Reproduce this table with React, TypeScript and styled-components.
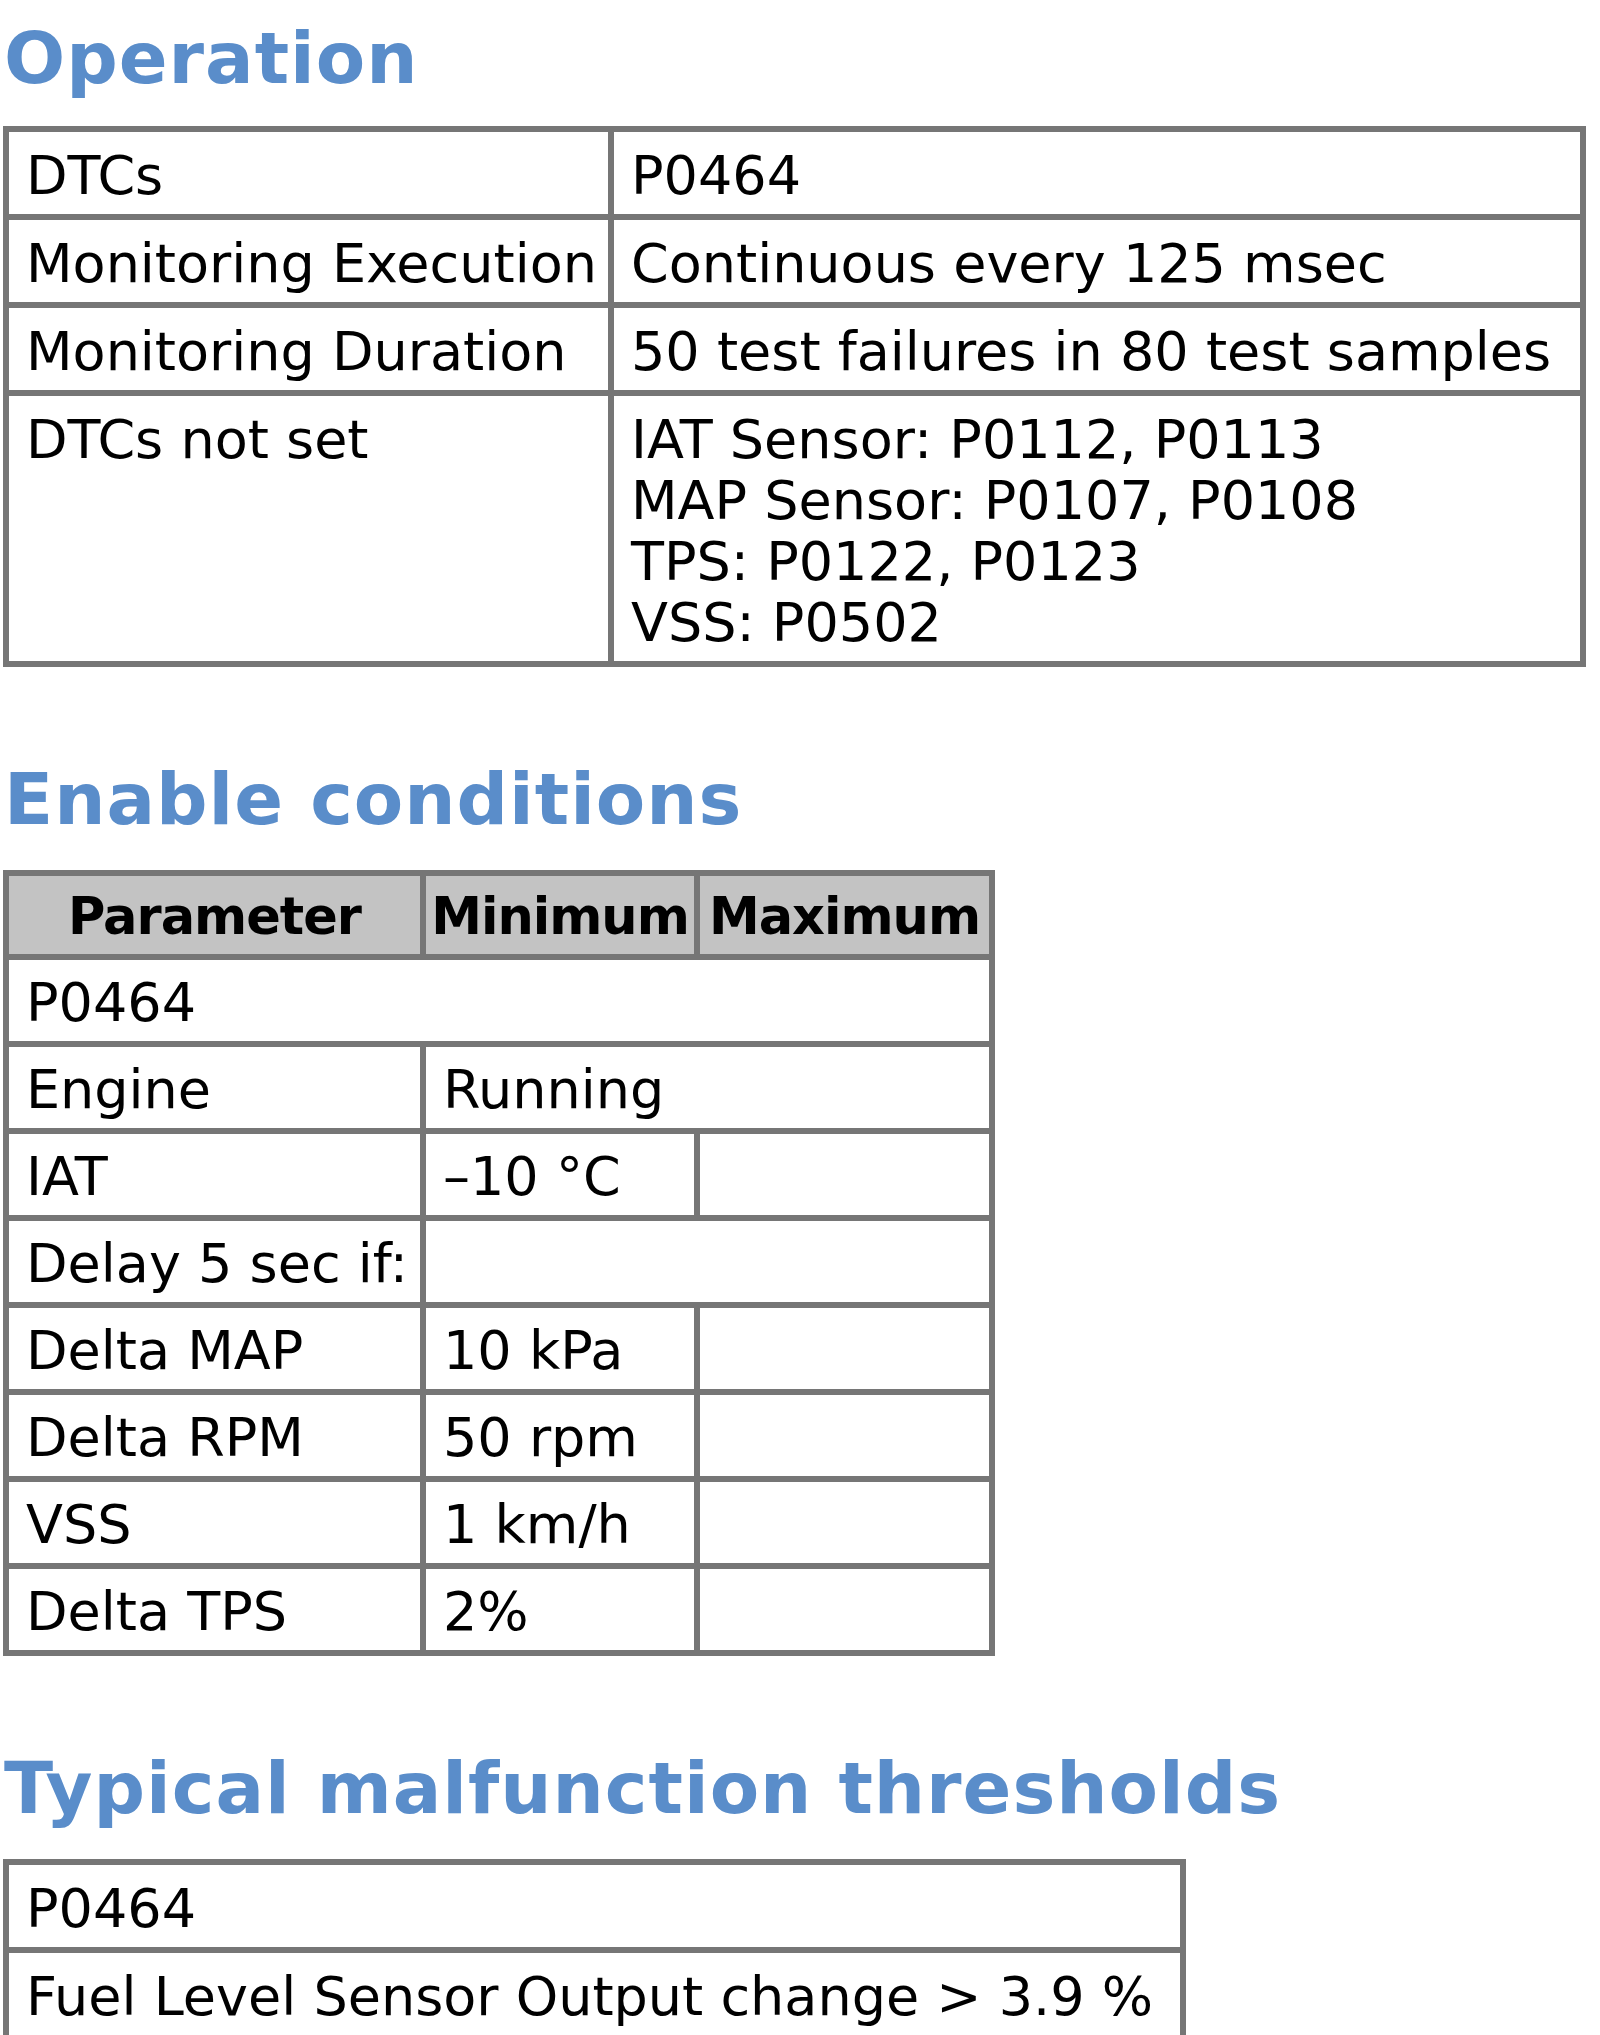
import styled, { createGlobalStyle } from "styled-components";

type Row = { label: string; value?: string[]; span?: number; max?: boolean };

const operation: { label: string; value: string[] }[] = [
  { label: "DTCs", value: ["P0464"] },
  { label: "Monitoring Execution", value: ["Continuous every 125 msec"] },
  { label: "Monitoring Duration", value: ["50 test failures in 80 test samples"] },
  {
    label: "DTCs not set",
    value: [
      "IAT Sensor: P0112, P0113",
      "MAP Sensor: P0107, P0108",
      "TPS: P0122, P0123",
      "VSS: P0502",
    ],
  },
];

const conditions: Row[] = [
  { label: "Engine", value: ["Running"], span: 2 },
  { label: "IAT", value: ["\u201310 \u00b0C"], max: true },
  { label: "Delay 5 sec if:", value: [""], span: 2 },
  { label: "Delta MAP", value: ["10 kPa"], max: true },
  { label: "Delta RPM", value: ["50 rpm"], max: true },
  { label: "VSS", value: ["1 km/h"], max: true },
  { label: "Delta TPS", value: ["2%"], max: true },
];

function App() {
  return (
    <>
      <GlobalStyle />
      <Page>
        <Heading $first>Operation</Heading>
        <Table $width={1577}>
          <colgroup>
            <Col $w={605} />
            <Col $w={972} />
          </colgroup>
          <tbody>
            {operation.map((row) => (
              <tr key={row.label}>
                <Cell $roomy>{row.label}</Cell>
                <Cell $roomy>
                  {row.value.map((line) => (
                    <Line key={line}>{line}</Line>
                  ))}
                </Cell>
              </tr>
            ))}
          </tbody>
        </Table>

        <Heading>Enable conditions</Heading>
        <Table $width={986}>
          <colgroup>
            <Col $w={417} />
            <Col $w={274} />
            <Col $w={295} />
          </colgroup>
          <thead>
            <tr>
              <HeadCell>Parameter</HeadCell>
              <HeadCell>Minimum</HeadCell>
              <HeadCell>Maximum</HeadCell>
            </tr>
          </thead>
          <tbody>
            <tr>
              <Cell colSpan={3}>P0464</Cell>
            </tr>
            {conditions.map((row) => (
              <tr key={row.label}>
                <Cell>{row.label}</Cell>
                <Cell colSpan={row.span ?? 1}>{row.value}</Cell>
                {row.max && <Cell />}
              </tr>
            ))}
          </tbody>
        </Table>

        <Heading>Typical malfunction thresholds</Heading>
        <Table $width={1183}>
          <tbody>
            <tr>
              <Cell $roomy>P0464</Cell>
            </tr>
            <tr>
              <Cell $roomy>Fuel Level Sensor Output change &gt; 3.9 %</Cell>
            </tr>
          </tbody>
        </Table>
      </Page>
    </>
  );
}

export default App;

const GlobalStyle = createGlobalStyle`
  html, body {
    margin: 0;
    padding: 0;
    background: #ffffff;
  }
  body {
    font-family: "DejaVu Sans", Verdana, sans-serif;
    color: #000000;
  }
`;

const Page = styled.div`
  padding: 16px 0 0 3px;
`;

const Heading = styled.h2<{ $first?: boolean }>`
  margin: ${({ $first }) => ($first ? "0 0 26px" : "90px 0 29px")};
  margin-left: 1px;
  font-size: 72px;
  line-height: 84px;
  letter-spacing: 1px;
  font-weight: 700;
  color: #5a8dca;
`;

const Table = styled.table<{ $width: number }>`
  width: ${({ $width }) => $width}px;
  border-collapse: collapse;
  table-layout: fixed;
  font-size: 54px;
  line-height: 61px;
`;

const Col = styled.col<{ $w: number }>`
  width: ${({ $w }) => $w}px;
`;

const Cell = styled.td<{ $roomy?: boolean }>`
  border: 6px solid #767676;
  padding: ${({ $roomy }) => ($roomy ? "13px 14px 8px 17px" : "12px 14px 8px 17px")};
  white-space: nowrap;
  vertical-align: top;
`;

const HeadCell = styled.th`
  border: 6px solid #767676;
  background: #c3c3c3;
  padding: 10px 2px 7px;
  font-size: 51px;
  letter-spacing: -1px;
  font-weight: 700;
  text-align: center;
  white-space: nowrap;
`;

const Line = styled.div``;
